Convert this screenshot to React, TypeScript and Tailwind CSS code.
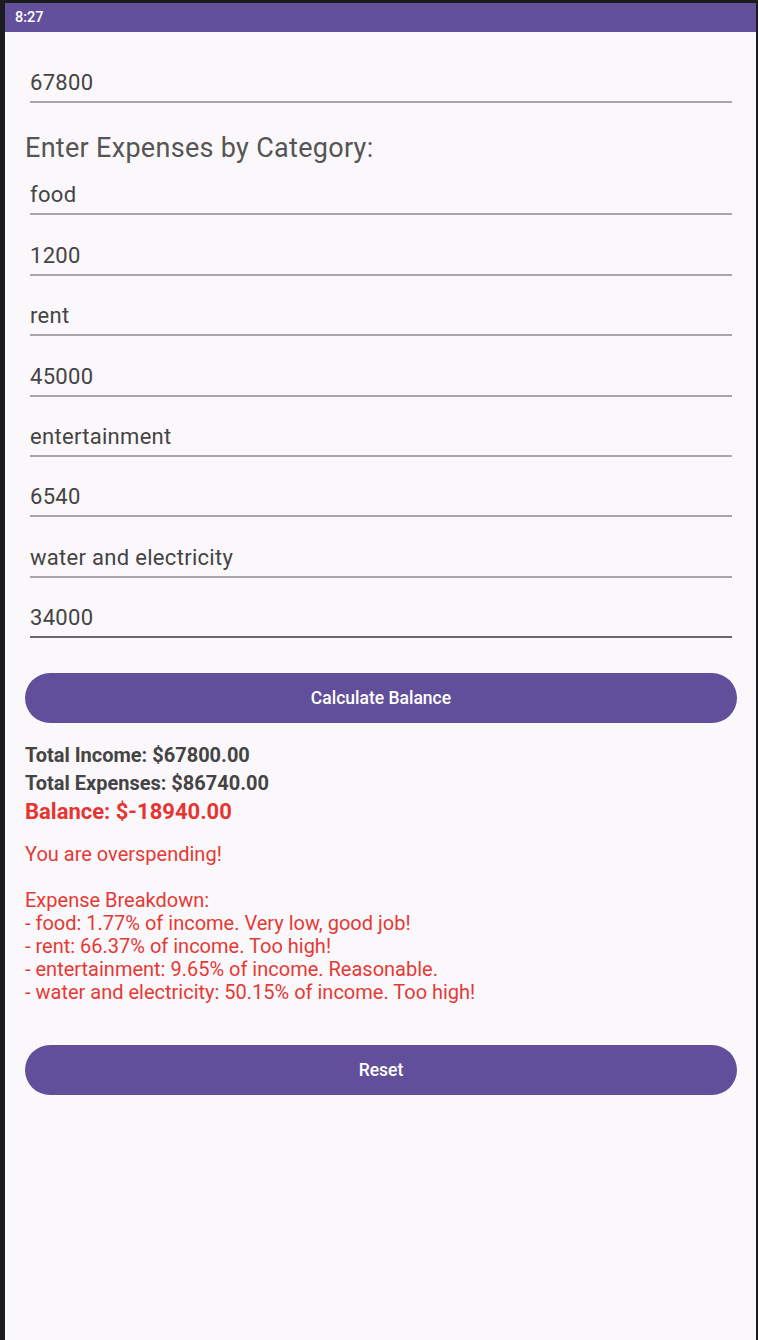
import React from 'react';

const Field = ({ value, pt = 'pt-[28.4px]', focused = false }: { value: string; pt?: string; focused?: boolean }) => (
  <div className={`${pt} mx-[5px]`}>
    <div
      className={`pb-[6px] text-[22px] tracking-[0.3px] leading-[24px] text-[#444] border-b-2 ${
        focused ? 'border-[#6b6670]' : 'border-[#a8a6aa]'
      }`}
    >
      {value}
    </div>
  </div>
);

export default function App() {
  const lines = [
    '- food: 1.77% of income. Very low, good job!',
    '- rent: 66.37% of income. Too high!',
    '- entertainment: 9.65% of income. Reasonable.',
    '- water and electricity: 50.15% of income. Too high!',
  ];

  return (
    <div className="w-[758px] h-[1340px] bg-[#1c1c1e] pt-[3px] pl-[5px] pr-[2px] font-['Roboto',sans-serif]">
      <div className="flex flex-col h-full bg-[#fbf8fb]">
        <div className="h-[29px] bg-[#63509a] flex items-center pl-[10px] text-white text-[14.5px] font-medium">
          8:27
        </div>

        <div className="pl-[20px] pr-[19px] pt-[11px]">
          <Field value="67800" />

          <div className="pt-[31px] text-[27px] tracking-[0.3px] leading-[28px] text-[#555]">
            Enter Expenses by Category:
          </div>

          <Field value="food" pt="pt-[21px]" />
          <Field value="1200" />
          <Field value="rent" />
          <Field value="45000" />
          <Field value="entertainment" />
          <Field value="6540" />
          <Field value="water and electricity" />
          <Field value="34000" focused />

          <button className="mt-[35px] w-full h-[50px] rounded-full bg-[#624f9b] text-white text-[17.5px] font-medium">
            Calculate Balance
          </button>

          <div className="mt-[18px] text-[20px] leading-[28px] font-bold text-[#444]">Total Income: $67800.00</div>
          <div className="text-[20px] leading-[28px] font-bold text-[#444]">Total Expenses: $86740.00</div>
          <div className="text-[22px] leading-[30px] font-bold text-[#e53532]">Balance: $-18940.00</div>

          <div className="mt-[16px] text-[20px] leading-[23px] text-[#e53935]">
            <div>You are overspending!</div>
            <div className="h-[23px]" />
            <div>Expense Breakdown:</div>
            {lines.map((l) => (
              <div key={l}>{l}</div>
            ))}
          </div>

          <button className="mt-[41px] w-full h-[50px] rounded-full bg-[#624f9b] text-white text-[17.5px] font-medium">
            Reset
          </button>
        </div>
      </div>
    </div>
  );
}
